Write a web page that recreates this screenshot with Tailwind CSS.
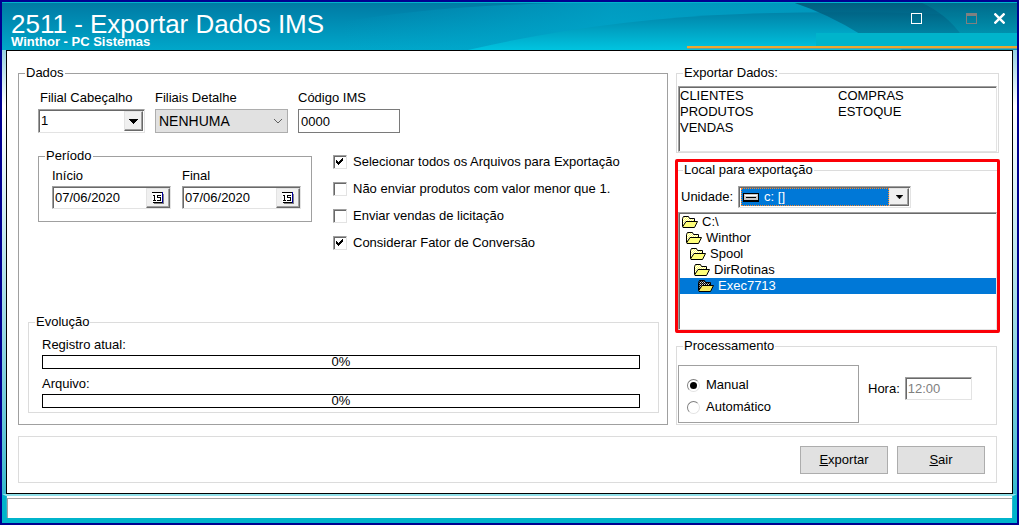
<!DOCTYPE html>
<html lang="pt-BR">
<head>
    <meta charset="UTF-8" />
    <meta name="viewport" content="width=device-width, initial-scale=1" />
    <title>2511 - Exportar Dados IMS</title>
    <script src="https://cdn.jsdelivr.net/npm/@tailwindcss/browser@4"></script>
</head>

<body class="font-['Liberation_Sans',Arial,sans-serif] text-[13px] leading-4 text-black">
    <!-- Shared icons -->
    <svg class="absolute size-0">
        <pattern id="dither-yellow" width="2" height="2" patternUnits="userSpaceOnUse">
            <rect width="2" height="2" fill="#ffff66" />
            <rect width="1" height="1" fill="#fff" />
            <rect x="1" y="1" width="1" height="1" fill="#fff" />
        </pattern>
        <pattern id="dither-black" width="2" height="2" patternUnits="userSpaceOnUse">
            <rect width="2" height="2" fill="#000" />
            <rect width="1" height="1" fill="#ddd" />
            <rect x="1" y="1" width="1" height="1" fill="#888" />
        </pattern>
        <symbol id="folder" viewBox="0 0 16 12">
            <path d="M.5 10.5v-8l1-2h5l1 2h5v3" fill="url(#dither-yellow)" stroke="#000" />
            <path d="M.5 11l3.500-5.500h11.500L12.500 11.500H1z" fill="#ffff7a" stroke="#000" />
        </symbol>
        <symbol id="folder-current" viewBox="0 0 16 12">
            <path d="M.5 10.500v-8l1-2h5l1 2h5v3" fill="url(#dither-black)" stroke="#000" />
            <path d="M.5 11l3.500-5.500h11.500L12.500 11.500H1z" fill="#f5e960" stroke="#000" />
        </symbol>
        <symbol id="arrow" viewBox="0 0 9 5">
            <path d="M0 0h9v1H8v1H7v1H6v1H5v1H4V4H3V3H2V2H1V1H0z" fill="#000" />
        </symbol>
        <symbol id="check" viewBox="0 0 8 8">
            <path d="M0 2h1v1h1v1h1V3h1V2h1V1h1V0h1v3H6v1H5v1H4v1H3v1H2V6H1V5H0z" fill="#000" />
        </symbol>
        <symbol id="calendar" viewBox="0 0 12 12">
            <path d="M2 2h10v10H2z" fill="#808080" />
            <path d="M0 0h10v10H0z" fill="#fff" />
            <path d="M0 0h11v1H0zM1 10h10v1H1z" fill="#000" />
            <path d="M10 0h1v11h-1z" fill="#0000a0" />
            <path d="M2 3h1v5h1v1H1V8h1V4H1V3zM5 3h4v1H6v1h3v4H5V8h3V6H5z" fill="#000" />
        </symbol>
    </svg>

    <div class="flex min-h-screen flex-col border-2 border-[#000090] bg-linear-to-b from-[#00a9c6] via-white via-20% to-[#00b4cb]">
        <header class="relative flex h-12 justify-between bg-[#008fb8] pr-3 pl-[9px] text-white">
            <svg class="absolute inset-0 size-full" viewBox="0 0 1015 48" preserveAspectRatio="none">
                <defs>
                    <linearGradient id="base" x2="0" y2="1">
                        <stop offset="0" stop-color="#0079a3" />
                        <stop offset="1" stop-color="#00a7ca" />
                    </linearGradient>
                    <linearGradient id="band">
                        <stop offset="0" stop-color="#00a8cc" stop-opacity="0" />
                        <stop offset=".4" stop-color="#00a8cc" stop-opacity=".7" />
                        <stop offset="1" stop-color="#009cc0" stop-opacity=".7" />
                    </linearGradient>
                    <linearGradient id="wave" x2="0" y2="1">
                        <stop offset="0" stop-color="#0083a8" />
                        <stop offset="1" stop-color="#00c4e0" />
                    </linearGradient>
                    <linearGradient id="dark" x2="0" y2="1">
                        <stop offset="0" stop-color="#004f70" />
                        <stop offset="1" stop-color="#0090ae" />
                    </linearGradient>
                    <linearGradient id="corner" x2="0" y2="1">
                        <stop offset="0" stop-color="#006c8c" />
                        <stop offset="1" stop-color="#00a0bb" />
                    </linearGradient>
                </defs>
                <path d="M0 0h1015v48H0z" fill="url(#base)" />
                <path d="M340 48V20Q430 4 560 1L1015 0V48z" fill="url(#band)" />
                <path d="M466 48Q600 17 740 12T1015 16V48z" fill="url(#wave)" />
                <path d="M790 0Q826 12 858 32L900 48H1015V0z" fill="url(#dark)" opacity=".8" />
                <path d="M918 0Q945 12 960 34L1015 40V0z" fill="url(#corner)" opacity=".8" />
                <path d="M0 0h1015v1H0z" fill="#00b4cc" />
                <path d="M814 31h201v13H814z" fill="#00b4cb" />
                <path d="M685 44h330v2H685z" fill="#eda72e" />
                <path d="M685 46h330v1H685z" fill="#6d9f96" />
            </svg>
            <div class="relative pt-[10px]">
                <h1 class="text-[26px] leading-6">2511 - Exportar Dados IMS</h1>
                <p class="text-[13px] leading-3 font-bold">Winthor - PC Sistemas</p>
            </div>
            <div class="relative flex items-start pt-[11px]">
                <button type="button" aria-label="Minimizar" class="mr-11 size-[11px] border border-white"></button>
                <button type="button" aria-label="Maximizar" class="mr-[17px] size-[11px] border border-t-3 border-[#808080]" disabled></button>
                <button type="button" aria-label="Fechar" class="size-[11px]">
                    <svg class="size-[11px]" viewBox="0 0 11 11"><path d="M.5.5l10 10M10.500.5l-10 10" stroke="#fff" stroke-width="2.400" /></svg>
                </button>
            </div>
        </header>

        <main class="mx-1 flex flex-1 flex-col border border-black bg-white pt-[14px] pr-[13px] pb-[10px] pl-[11px]">
            <div class="flex flex-1 gap-2">
                <fieldset class="flex flex-1 flex-col border border-[#a0a0a0] pr-2 pb-[11px] pl-[9px]">
                    <legend class="ml-[-3px] px-px">Dados</legend>

                    <div class="flex gap-[10px] pt-[9px] pl-[10px]">
                        <div class="flex w-[107px] flex-col gap-[3px]">
                            <label for="filial" class="pl-0.5">Filial Cabeçalho</label>
                            <div class="flex h-6 border border-t-[#a0a0a0] border-r-[#e3e3e3] border-b-[#e3e3e3] border-l-[#a0a0a0] p-px pl-[2px] shadow-[inset_1px_1px_0_#696969]">
                                <select id="filial" class="min-w-0 flex-1 appearance-none outline-none"><option>1</option></select>
                                <span class="flex w-[19px] items-center justify-center border border-t-[#e3e3e3] border-r-[#696969] border-b-[#696969] border-l-[#e3e3e3] bg-[#f0f0f0] shadow-[inset_-1px_-1px_0_#a0a0a0]"><svg class="h-[5px] w-[9px]"><use href="#arrow" /></svg></span>
                            </div>
                        </div>
                        <div class="flex w-[133px] flex-col gap-[3px]">
                            <label for="filiais">Filiais Detalhe</label>
                            <div class="flex h-6 items-center border border-[#adadad] bg-[#e1e1e1] pr-1 pl-[3px]">
                                <select id="filiais" class="min-w-0 flex-1 appearance-none text-[14px] outline-none"><option>NENHUMA</option></select>
                                <svg class="h-[6px] w-[10px]" viewBox="0 0 10 6"><path d="M1 1l4 4 4-4" fill="none" stroke="#606060" /></svg>
                            </div>
                        </div>
                        <div class="flex w-[102px] flex-col gap-[3px]">
                            <label for="codigo">Código IMS</label>
                            <input id="codigo" type="text" value="0000" class="h-6 w-full border border-[#7a7a7a] px-0.5 outline-none" />
                        </div>
                    </div>

                    <div class="flex items-start gap-[21px] pt-[15px] pl-[10px]">
                        <fieldset class="flex w-[274px] gap-[11px] border border-[#a0a0a0] pt-1 pr-[10px] pb-3 pl-[13px]">
                            <legend class="ml-[-7px] px-px">Período</legend>
                            <div class="flex w-[119px] flex-col gap-[2px]">
                                <label for="inicio">Início</label>
                                <div class="flex h-[23px] border border-t-[#a0a0a0] border-r-[#e3e3e3] border-b-[#e3e3e3] border-l-[#a0a0a0] pt-px pl-[2px] shadow-[inset_1px_1px_0_#696969]">
                                    <input id="inicio" type="text" value="07/06/2020" class="min-w-0 flex-1 outline-none" />
                                    <button type="button" aria-label="Calendário" class="flex w-6 items-center justify-center border border-t-[#e3e3e3] border-r-[#696969] border-b-[#696969] border-l-[#e3e3e3] bg-[#f0f0f0] shadow-[inset_-1px_-1px_0_#a0a0a0]"><svg class="size-3"><use href="#calendar" /></svg></button>
                                </div>
                            </div>
                            <div class="flex w-[119px] flex-col gap-[2px]">
                                <label for="final">Final</label>
                                <div class="flex h-[23px] border border-t-[#a0a0a0] border-r-[#e3e3e3] border-b-[#e3e3e3] border-l-[#a0a0a0] pt-px pl-[2px] shadow-[inset_1px_1px_0_#696969]">
                                    <input id="final" type="text" value="07/06/2020" class="min-w-0 flex-1 outline-none" />
                                    <button type="button" aria-label="Calendário" class="flex w-6 items-center justify-center border border-t-[#e3e3e3] border-r-[#696969] border-b-[#696969] border-l-[#e3e3e3] bg-[#f0f0f0] shadow-[inset_-1px_-1px_0_#a0a0a0]"><svg class="size-3"><use href="#calendar" /></svg></button>
                                </div>
                            </div>
                        </fieldset>

                        <div class="flex flex-col gap-[11px] pt-[6px]">
                            <label class="flex h-4 items-center gap-[6px]">
                                <span class="grid place-items-center">
                                    <input type="checkbox" checked class="peer size-[14px] appearance-none border border-t-[#a0a0a0] border-r-[#e3e3e3] border-b-[#e3e3e3] border-l-[#a0a0a0] shadow-[inset_1px_1px_0_#696969] [grid-area:1/1]" />
                                    <svg class="pointer-events-none hidden size-2 peer-checked:block [grid-area:1/1]"><use href="#check" /></svg>
                                </span>
                                Selecionar todos os Arquivos para Exportação
                            </label>
                            <label class="flex h-4 items-center gap-[6px]">
                                <span class="grid place-items-center">
                                    <input type="checkbox" class="peer size-[14px] appearance-none border border-t-[#a0a0a0] border-r-[#e3e3e3] border-b-[#e3e3e3] border-l-[#a0a0a0] shadow-[inset_1px_1px_0_#696969] [grid-area:1/1]" />
                                    <svg class="pointer-events-none hidden size-2 peer-checked:block [grid-area:1/1]"><use href="#check" /></svg>
                                </span>
                                Não enviar produtos com valor menor que 1.
                            </label>
                            <label class="flex h-4 items-center gap-[6px]">
                                <span class="grid place-items-center">
                                    <input type="checkbox" class="peer size-[14px] appearance-none border border-t-[#a0a0a0] border-r-[#e3e3e3] border-b-[#e3e3e3] border-l-[#a0a0a0] shadow-[inset_1px_1px_0_#696969] [grid-area:1/1]" />
                                    <svg class="pointer-events-none hidden size-2 peer-checked:block [grid-area:1/1]"><use href="#check" /></svg>
                                </span>
                                Enviar vendas de licitação
                            </label>
                            <label class="flex h-4 items-center gap-[6px]">
                                <span class="grid place-items-center">
                                    <input type="checkbox" checked class="peer size-[14px] appearance-none border border-t-[#a0a0a0] border-r-[#e3e3e3] border-b-[#e3e3e3] border-l-[#a0a0a0] shadow-[inset_1px_1px_0_#696969] [grid-area:1/1]" />
                                    <svg class="pointer-events-none hidden size-2 peer-checked:block [grid-area:1/1]"><use href="#check" /></svg>
                                </span>
                                Considerar Fator de Conversão
                            </label>
                        </div>
                    </div>

                    <fieldset class="mt-auto border border-[#dcdcdc] pt-[7px] pr-[18px] pb-1 pl-[13px]">
                        <legend class="ml-[-7px] px-px">Evolução</legend>
                        <div id="registro-label">Registro atual:</div>
                        <div role="progressbar" aria-labelledby="registro-label" aria-valuenow="0" class="mt-0.5 h-[14px] border border-black text-center leading-3">0%</div>
                        <div id="arquivo-label" class="mt-[7px]">Arquivo:</div>
                        <div role="progressbar" aria-labelledby="arquivo-label" aria-valuenow="0" class="mt-0.5 h-[14px] border border-black text-center leading-3">0%</div>
                    </fieldset>
                </fieldset>

                <div class="flex w-[323px] flex-col">
                    <fieldset class="border border-[#dcdcdc] px-px pt-[5px]">
                        <legend class="ml-[5px] px-px">Exportar Dados:</legend>
                        <ul class="h-[66px] columns-2 gap-0 border border-t-[#a0a0a0] border-r-[#e3e3e3] border-b-[#e3e3e3] border-l-[#a0a0a0] pt-px pl-px leading-4 shadow-[inset_1px_1px_0_#696969] [column-fill:auto]">
                            <li>CLIENTES</li>
                            <li>PRODUTOS</li>
                            <li>VENDAS</li>
                            <li class="break-before-column">COMPRAS</li>
                            <li>ESTOQUE</li>
                        </ul>
                    </fieldset>

                    <div class="relative mt-[9px]">
                        <fieldset class="border border-[#dcdcdc] px-px pt-2 pb-[2px]">
                            <legend class="ml-[5px] px-px">Local para exportação</legend>
                            <div class="flex items-center gap-[5px] pl-[3px]">
                                <label for="unidade">Unidade:</label>
                                <div class="flex h-[22px] w-[173px] border border-t-[#a0a0a0] border-r-[#e3e3e3] border-b-[#e3e3e3] border-l-[#a0a0a0] p-px pl-[2px] shadow-[inset_1px_1px_0_#696969]">
                                    <div class="flex flex-1 items-center gap-[5px] border border-dotted border-[#ff8728] bg-[#0078d7] pl-px">
                                        <svg class="h-[9px] w-4" viewBox="0 0 16 9">
                                            <path d="M0 0h16v9H0z" fill="#000" />
                                            <path d="M1 1h14v6H1z" fill="#c8c8c8" />
                                            <path d="M2 2h12v1H2z" fill="#fff" />
                                            <path d="M3 4h10v1H3z" fill="#000" />
                                        </svg>
                                        <select id="unidade" class="min-w-0 flex-1 appearance-none text-white outline-none"><option>c: []</option></select>
                                    </div>
                                    <span class="flex w-[20px] items-center justify-center border border-t-[#e3e3e3] border-r-[#696969] border-b-[#696969] border-l-[#e3e3e3] bg-[#f0f0f0] shadow-[inset_-1px_-1px_0_#a0a0a0]"><svg class="h-1 w-[7px]"><use href="#arrow" /></svg></span>
                                </div>
                            </div>
                            <ul class="mt-1 h-[118px] border border-t-[#a0a0a0] border-r-[#e3e3e3] border-b-[#e3e3e3] border-l-[#a0a0a0] pt-px pl-px leading-4 shadow-[inset_1px_1px_0_#696969]">
                                <li class="flex items-center gap-1 pl-0.5"><svg class="h-3 w-4"><use href="#folder" /></svg>C:\</li>
                                <li class="flex items-center gap-1 pl-1.5"><svg class="h-3 w-4"><use href="#folder" /></svg>Winthor</li>
                                <li class="flex items-center gap-1 pl-2.5"><svg class="h-3 w-4"><use href="#folder" /></svg>Spool</li>
                                <li class="flex items-center gap-1 pl-3.5"><svg class="h-3 w-4"><use href="#folder" /></svg>DirRotinas</li>
                                <li class="flex items-center gap-1 bg-[#0078d7] pl-4.5 text-white"><svg class="h-3 w-4"><use href="#folder-current" /></svg>Exec7713</li>
                            </ul>
                        </fieldset>
                        <!-- Red highlight over the group -->
                        <div class="pointer-events-none absolute -inset-x-px -top-[3px] bottom-0 rounded-xs border-3 border-[#fb0007]"></div>
                    </div>

                    <fieldset class="mt-[5px] mr-0.5 flex flex-1 border border-[#dcdcdc] px-px pt-[11px] pb-px">
                        <legend class="ml-[5px] px-px">Processamento</legend>
                        <div class="flex w-[181px] flex-col gap-[6px] border border-[#a0a0a0] pt-[11px] pl-2">
                            <label class="flex h-4 items-center gap-[6px]">
                                <input type="radio" name="modo" checked class="grid size-[13px] appearance-none place-items-center rounded-full border border-t-[#808080] border-r-[#e3e3e3] border-b-[#e3e3e3] border-l-[#808080] before:size-[7px] before:rounded-full checked:before:bg-black" />
                                Manual
                            </label>
                            <label class="flex h-4 items-center gap-[6px]">
                                <input type="radio" name="modo" class="grid size-[13px] appearance-none place-items-center rounded-full border border-t-[#808080] border-r-[#e3e3e3] border-b-[#e3e3e3] border-l-[#808080] before:size-[7px] before:rounded-full checked:before:bg-black" />
                                Automático
                            </label>
                        </div>
                        <div class="flex items-start gap-[5px] pt-3 pl-[9px]">
                            <label for="hora" class="pt-1">Hora:</label>
                            <input id="hora" type="text" value="12:00" disabled class="h-[23px] w-[67px] border border-t-[#a0a0a0] border-r-[#e3e3e3] border-b-[#e3e3e3] border-l-[#a0a0a0] pl-[2px] text-[#808080] shadow-[inset_1px_1px_0_#696969]" />
                        </div>
                    </fieldset>
                </div>
            </div>

            <div class="mt-[11px] mr-0.5 flex justify-end gap-[9px] border border-[#dcdcdc] pt-[9px] pr-[11px] pb-2">
                <button type="button" class="h-7 w-[88px] border border-[#adadad] bg-[#e1e1e1]"><u>E</u>xportar</button>
                <button type="button" class="h-7 w-[88px] border border-[#adadad] bg-[#e1e1e1]"><u>S</u>air</button>
            </div>
        </main>

        <!-- Status bar -->
        <footer class="border-x-4 border-t-2 border-b-5 border-[#00b4cb] border-t-[#8fdfe8] px-px">
            <div class="bg-white pt-0.5"><div class="h-5 border-t border-l border-[#a0a0a0]"></div></div>
        </footer>
    </div>
</body>

</html>
